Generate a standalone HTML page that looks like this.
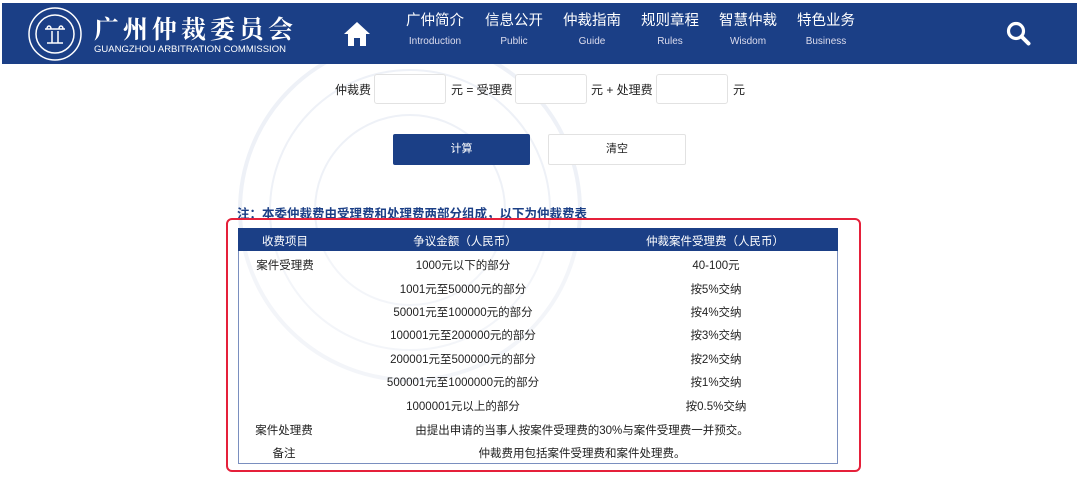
<!DOCTYPE html>
<html><head><meta charset="utf-8"><style>
*{margin:0;padding:0;box-sizing:border-box}
body{width:1080px;height:497px;background:#fff;position:relative;overflow:hidden;font-family:"Liberation Sans","Noto Sans CJK SC",sans-serif;color:#222}
.a{position:absolute;white-space:nowrap}
.hdr{position:absolute;left:2px;top:3px;width:1075px;height:61px;background:#1b3f86}
.nav{position:absolute;top:12px;color:#fff;text-align:center;width:70px}
.nav b{display:block;font-weight:normal;font-size:14.5px;line-height:18px}
.nav i{display:block;font-style:normal;font-size:10px;line-height:14px;margin-top:5px;color:#dde}
.inp{position:absolute;top:74px;width:72px;height:30px;border:1px solid #e2e2e2;border-radius:3px;background:#fff}
.lab{position:absolute;top:81px;font-size:12px;color:#222}
.row{position:absolute;font-size:11.5px;color:#222;transform:translateX(-50%)}
</style></head><body>
<svg class="a" style="left:200px;top:40px" width="440" height="380" viewBox="0 0 440 380">
<g fill="none" stroke="#eef1f7" stroke-width="4">
<circle cx="210" cy="170" r="170"/><circle cx="210" cy="170" r="140" stroke-width="2"/><circle cx="210" cy="170" r="95" stroke-width="2"/>
</g></svg>
<div class="hdr"></div>
<svg class="a" style="left:27px;top:6px" width="56" height="56" viewBox="0 0 56 56"><g fill="none" stroke="#fff" stroke-width="1.5"><circle cx="28" cy="28" r="26"/><circle cx="28" cy="28" r="19"/><path d="M18 23h20M20 23c0-4 4-4 4 0M32 23c0-4 4-4 4 0M25 25v12M31 25v12M20 37h16"/></g></svg>
<div class="a" style="left:94px;top:10px;color:#fff;font-family:'Noto Serif CJK SC',serif;font-size:25px;letter-spacing:4px;font-weight:bold">广州仲裁委员会</div>
<div class="a" style="left:94px;top:44px;color:#fff;font-size:9.5px">GUANGZHOU ARBITRATION COMMISSION</div>
<svg class="a" style="left:343px;top:21px" width="28" height="26" viewBox="0 0 28 26"><path d="M14 1L1 13h4v12h6v-8h6v8h6V13h4z" fill="#fff"/></svg>
<div class="nav" style="left:400px"><b>广仲简介</b><i>Introduction</i></div>
<div class="nav" style="left:479px"><b>信息公开</b><i>Public</i></div>
<div class="nav" style="left:557px"><b>仲裁指南</b><i>Guide</i></div>
<div class="nav" style="left:635px"><b>规则章程</b><i>Rules</i></div>
<div class="nav" style="left:713px"><b>智慧仲裁</b><i>Wisdom</i></div>
<div class="nav" style="left:791px"><b>特色业务</b><i>Business</i></div>
<svg class="a" style="left:1006px;top:21px" width="26" height="26" viewBox="0 0 26 26"><circle cx="10" cy="10" r="7.5" fill="none" stroke="#fff" stroke-width="3.2"/><path d="M15.5 15.5l7 7" stroke="#fff" stroke-width="4" stroke-linecap="round"/></svg>
<div class="lab" style="left:335px">仲裁费</div>
<div class="inp" style="left:374px"></div>
<div class="lab" style="left:451px">元 = 受理费</div>
<div class="inp" style="left:515px"></div>
<div class="lab" style="left:591px">元 + 处理费</div>
<div class="inp" style="left:656px"></div>
<div class="lab" style="left:733px">元</div>
<div class="a" style="left:393px;top:134px;width:137px;height:31px;background:#1b3f86;border-radius:2px;color:#fff;font-size:11px;text-align:center;line-height:31px">计算</div>
<div class="a" style="left:548px;top:134px;width:138px;height:31px;border:1px solid #e2e2e2;border-radius:2px;font-size:11px;text-align:center;line-height:29px;background:#fff">清空</div>
<div class="a" style="left:237px;top:203px;color:#1b3f86;font-size:12.5px;font-weight:bold">注：本委仲裁费由受理费和处理费两部分组成，以下为仲裁费表</div>
<div class="a" style="left:226px;top:218px;width:635px;height:254px;border:2px solid #e5203a;border-radius:6px"></div>
<div class="a" style="left:238px;top:228px;width:600px;height:236px;border:1px solid #7a8fbf;background:rgba(255,255,255,0.3)"></div>
<div class="a" style="left:238px;top:228px;width:600px;height:23px;background:#1b3f86"></div>
<div class="row" style="left:285px;top:233px;color:#fff">收费项目</div>
<div class="row" style="left:465px;top:233px;color:#fff">争议金额（人民币）</div>
<div class="row" style="left:715px;top:233px;color:#fff">仲裁案件受理费（人民币）</div>
<div class="row" style="left:285px;top:257px">案件受理费</div>
<div class="row" style="left:463px;top:257px">1000元以下的部分</div><div class="row" style="left:716px;top:257px">40-100元</div>
<div class="row" style="left:463px;top:281px">1001元至50000元的部分</div><div class="row" style="left:716px;top:281px">按5%交纳</div>
<div class="row" style="left:463px;top:304px">50001元至100000元的部分</div><div class="row" style="left:716px;top:304px">按4%交纳</div>
<div class="row" style="left:463px;top:327px">100001元至200000元的部分</div><div class="row" style="left:716px;top:327px">按3%交纳</div>
<div class="row" style="left:463px;top:351px">200001元至500000元的部分</div><div class="row" style="left:716px;top:351px">按2%交纳</div>
<div class="row" style="left:463px;top:374px">500001元至1000000元的部分</div><div class="row" style="left:716px;top:374px">按1%交纳</div>
<div class="row" style="left:463px;top:398px">1000001元以上的部分</div><div class="row" style="left:716px;top:398px">按0.5%交纳</div>
<div class="row" style="left:284px;top:422px">案件处理费</div>
<div class="row" style="left:582px;top:422px">由提出申请的当事人按案件受理费的30%与案件受理费一并预交。</div>
<div class="row" style="left:284px;top:445px">备注</div>
<div class="row" style="left:582px;top:445px">仲裁费用包括案件受理费和案件处理费。</div>
</body></html>
